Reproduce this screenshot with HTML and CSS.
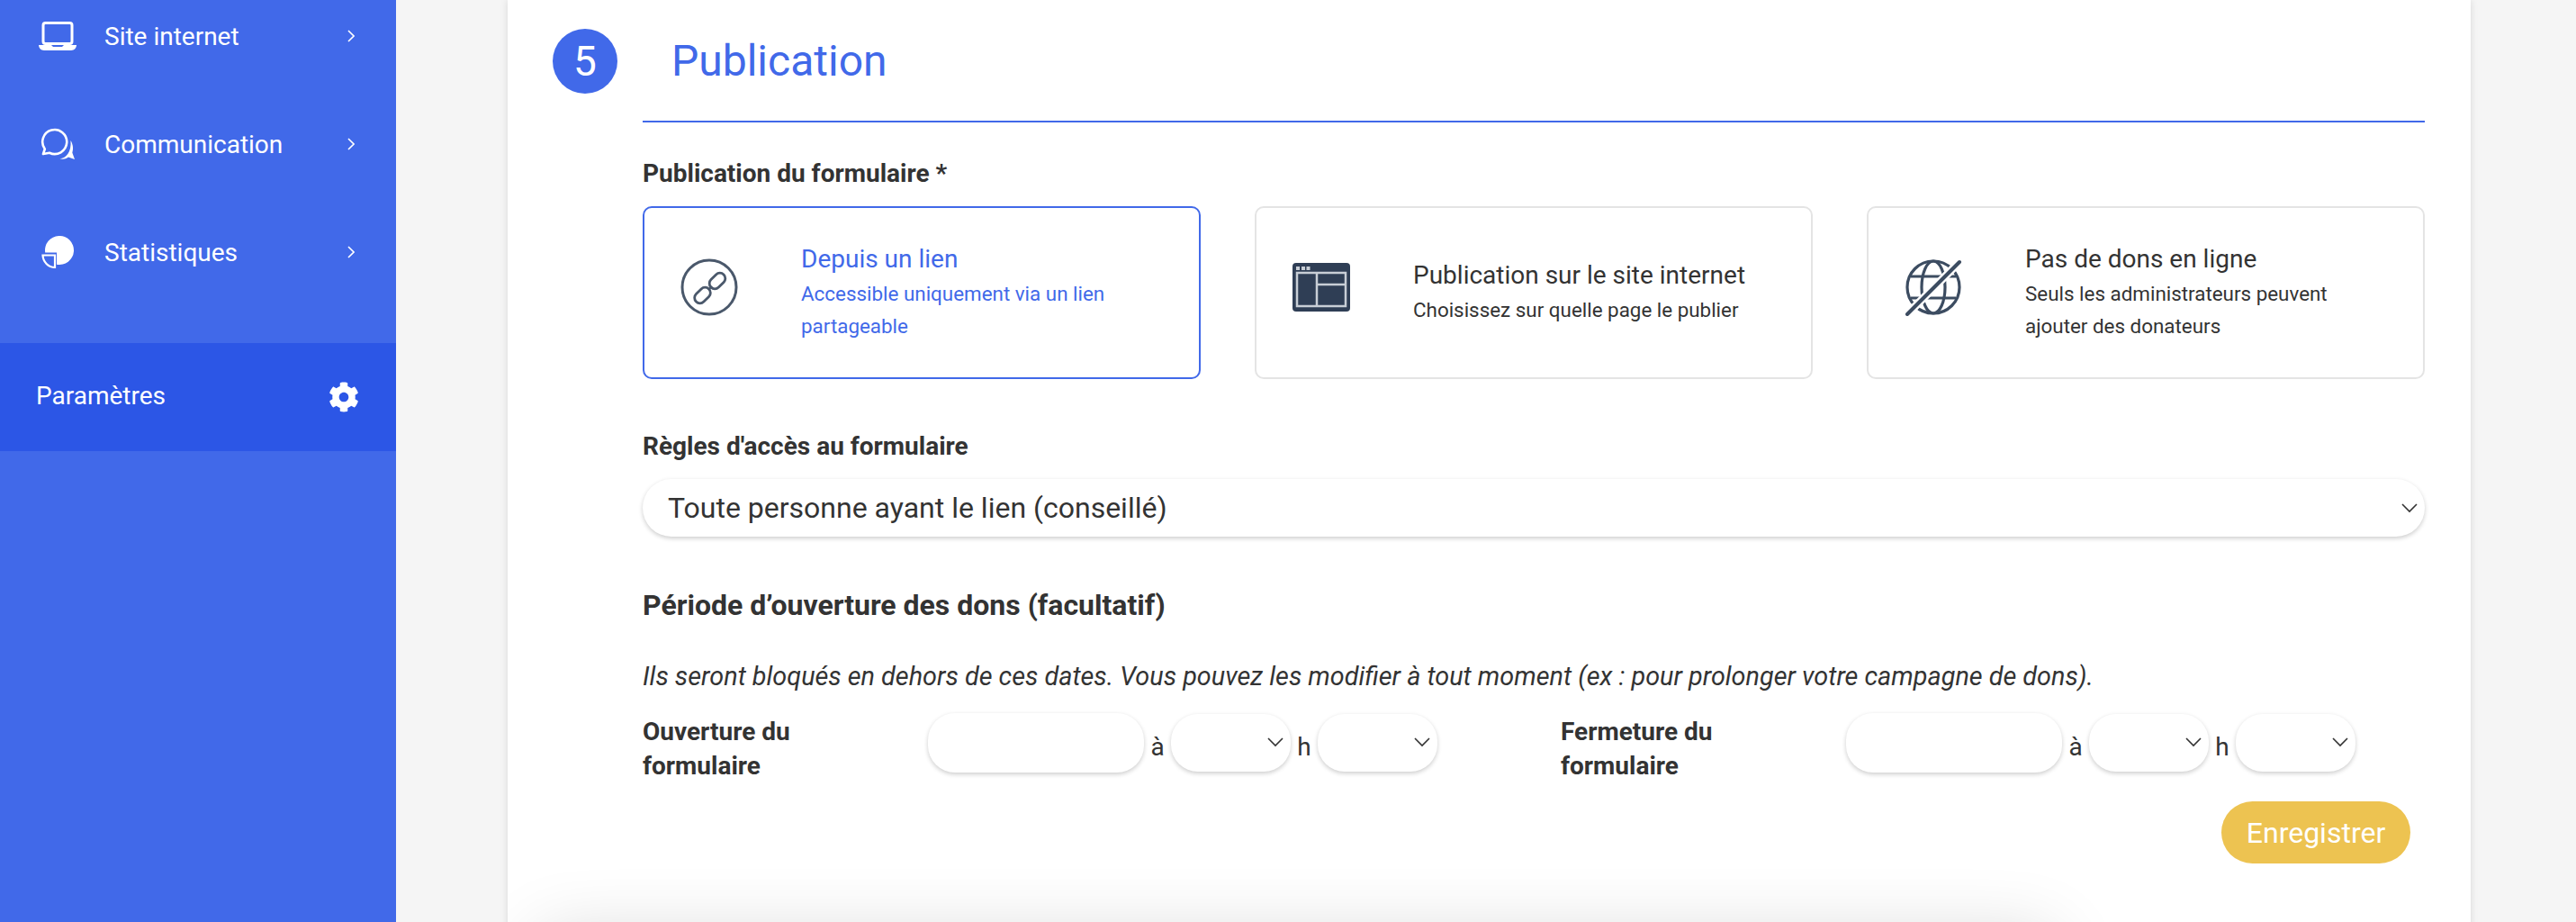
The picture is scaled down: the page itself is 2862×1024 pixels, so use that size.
FILE: index.html
```html
<!DOCTYPE html>
<html lang="fr">
<head>
<meta charset="utf-8">
<title>Publication</title>
<link rel="stylesheet" href="styles.css">
</head>
<body>
<div class="app">
  <aside class="sidebar">
    <nav class="nav">
      <a class="nav-item">
        <span class="nav-icon">
          <svg width="42" height="32" viewBox="0 0 42 32"><rect x="5" y="1.500" width="32" height="23" rx="2.500" fill="none" stroke="#fff" stroke-width="3"/><path d="M0 26h14l2 2h10l2-2h14c0 3-2.500 6-6 6H6c-3.500 0-6-3-6-6z" fill="#fff"/></svg>
        </span>
        <span class="nav-label">Site internet</span>
        <svg class="nav-chevron" width="8" height="14" viewBox="0 0 8 14"><path d="M1 1l6 6-6 6" fill="none" stroke="#fff" stroke-width="1.600"/></svg>
      </a>
      <a class="nav-item">
        <span class="nav-icon">
          <svg width="42" height="36" viewBox="0 0 42 36"><g transform="translate(3 1)"><path d="M9 26.800A13.500 13.500 0 1 0 3.800 22.500L2 28z" fill="none" stroke="#fff" stroke-width="2.600" stroke-linejoin="round"/><path d="M32.500 13c3 5 3 10 1.800 13.500L37 34l-7-2.500c-3 2-6 2.800-9.500 1.800 7-.8 13-7 12-20.300z" fill="#fff"/></g></svg>
        </span>
        <span class="nav-label">Communication</span>
        <svg class="nav-chevron" width="8" height="14" viewBox="0 0 8 14"><path d="M1 1l6 6-6 6" fill="none" stroke="#fff" stroke-width="1.600"/></svg>
      </a>
      <a class="nav-item">
        <span class="nav-icon">
          <svg width="42" height="36" viewBox="0 0 42 36"><g transform="translate(3 0)"><path d="M17 31.700V18.500H4.200A16 16 0 1 1 17 31.700z" fill="#fff"/><path d="M1.500 21.500H15V35A14 14 0 0 1 1.500 21.500z" fill="none" stroke="#fff" stroke-width="2.200"/></g></svg>
        </span>
        <span class="nav-label">Statistiques</span>
        <svg class="nav-chevron" width="8" height="14" viewBox="0 0 8 14"><path d="M1 1l6 6-6 6" fill="none" stroke="#fff" stroke-width="1.600"/></svg>
      </a>
    </nav>
    <a class="settings">
      <span class="settings-label">Paramètres</span>
      <svg width="34" height="34" viewBox="0 0 512 512"><path fill="#fff" d="M487.4 315.7l-42.6-24.6c4.300-23.200 4.300-47 0-70.200l42.600-24.600c4.900-2.800 7.100-8.600 5.500-14-11.100-35.600-30-67.800-54.700-94.600-3.800-4.100-10-5.100-14.800-2.300L380.800 110c-17.900-15.400-38.500-27.300-60.800-35.100V25.800c0-5.600-3.900-10.500-9.400-11.700-36.700-8.200-74.300-7.800-109.200 0-5.500 1.200-9.400 6.100-9.400 11.700V75c-22.200 7.900-42.800 19.800-60.800 35.100L88.700 85.500c-4.900-2.800-11-1.900-14.800 2.300-24.700 26.700-43.600 58.900-54.700 94.600-1.700 5.400.6 11.200 5.500 14L67.300 221c-4.300 23.200-4.300 47 0 70.200l-42.600 24.600c-4.900 2.800-7.100 8.600-5.500 14 11.100 35.600 30 67.800 54.700 94.600 3.800 4.100 10 5.100 14.800 2.300l42.600-24.600c17.900 15.400 38.500 27.300 60.800 35.100v49.200c0 5.600 3.900 10.500 9.400 11.700 36.700 8.200 74.300 7.800 109.200 0 5.500-1.200 9.400-6.100 9.400-11.700v-49.200c22.200-7.900 42.800-19.800 60.800-35.100l42.600 24.600c4.900 2.800 11 1.900 14.800-2.300 24.700-26.700 43.600-58.900 54.700-94.600 1.500-5.500-.7-11.300-5.600-14.100zM256 336c-44.100 0-80-35.900-80-80s35.900-80 80-80 80 35.900 80 80-35.900 80-80 80z"/></svg>
    </a>
  </aside>

  <main class="main">
    <section class="panel">
      <header class="step-head">
        <span class="step-num">5</span>
        <h2 class="step-title">Publication</h2>
      </header>
      <form class="form">
        <div class="field-label first">Publication du formulaire *</div>
        <div class="choices">
          <div class="choice active">
            <span class="choice-icon">
              <svg width="64" height="64" viewBox="0 0 64 64" fill="none" stroke="#4a586b"><circle cx="32" cy="32" r="30" stroke-width="3"/><g stroke-width="2.800"><rect x="14.500" y="35" width="20" height="12" rx="6" transform="rotate(-45 24.500 41)"/><rect x="31" y="19" width="20" height="12" rx="6" transform="rotate(-45 41 25)"/></g><path d="M31 35l4-4" stroke-width="2.400"/></svg>
            </span>
            <div class="choice-text">
              <div class="choice-title">Depuis un lien</div>
              <div class="choice-sub">Accessible uniquement via un lien partageable</div>
            </div>
          </div>
          <div class="choice">
            <span class="choice-icon">
              <svg width="64" height="54" viewBox="0 0 64 54"><rect width="64" height="54" rx="4" fill="#2f3e55"/><rect x="5" y="11" width="54" height="37" fill="none" stroke="#c8ced6" stroke-width="2.500"/><path d="M27 11v37M27 24h32" stroke="#c8ced6" stroke-width="2.500" fill="none"/><path d="M4 4h4v4H4zM10 4h4v4h-4zM15.500 4h4v4h-4z" fill="#c8ced6"/></svg>
            </span>
            <div class="choice-text">
              <div class="choice-title">Publication sur le site internet</div>
              <div class="choice-sub">Choisissez sur quelle page le publier</div>
            </div>
          </div>
          <div class="choice">
            <span class="choice-icon">
              <svg width="64" height="64" viewBox="0 0 64 64" fill="none" stroke="#3c4c61" stroke-width="3.200"><circle cx="32" cy="32" r="29"/><ellipse cx="32" cy="32" rx="13" ry="29"/><path d="M7 20h50M7 44h50"/><path d="M3 62L61 4" stroke="#fff" stroke-width="9"/><path d="M3 62L61 4" stroke-width="4" stroke-linecap="round"/></svg>
            </span>
            <div class="choice-text">
              <div class="choice-title">Pas de dons en ligne</div>
              <div class="choice-sub">Seuls les administrateurs peuvent ajouter des donateurs</div>
            </div>
          </div>
        </div>

        <div class="field-label second">Règles d'accès au formulaire</div>
        <div class="select-wrap wide">
          <select class="control select-main">
            <option>Toute personne ayant le lien (conseillé)</option>
          </select>
          <svg class="select-chevron" width="18" height="11" viewBox="0 0 18 11"><path d="M1 1l8 8 8-8" fill="none" stroke="#333" stroke-width="1.600"/></svg>
        </div>

        <h3 class="section-title">Période d’ouverture des dons (facultatif)</h3>
        <p class="hint">Ils seront bloqués en dehors de ces dates. Vous pouvez les modifier à tout moment (ex : pour prolonger votre campagne de dons).</p>

        <div class="dates">
          <div class="date-group">
            <label class="date-label">Ouverture du formulaire</label>
            <input class="control date-input" type="text">
            <span class="date-sep">à</span>
            <div class="select-wrap time"><select class="control"></select><svg class="select-chevron" width="18" height="11" viewBox="0 0 18 11"><path d="M1 1l8 8 8-8" fill="none" stroke="#333" stroke-width="1.600"/></svg></div>
            <span class="date-sep">h</span>
            <div class="select-wrap time"><select class="control"></select><svg class="select-chevron" width="18" height="11" viewBox="0 0 18 11"><path d="M1 1l8 8 8-8" fill="none" stroke="#333" stroke-width="1.600"/></svg></div>
          </div>
          <div class="date-group">
            <label class="date-label">Fermeture du formulaire</label>
            <input class="control date-input" type="text">
            <span class="date-sep">à</span>
            <div class="select-wrap time"><select class="control"></select><svg class="select-chevron" width="18" height="11" viewBox="0 0 18 11"><path d="M1 1l8 8 8-8" fill="none" stroke="#333" stroke-width="1.600"/></svg></div>
            <span class="date-sep">h</span>
            <div class="select-wrap time"><select class="control"></select><svg class="select-chevron" width="18" height="11" viewBox="0 0 18 11"><path d="M1 1l8 8 8-8" fill="none" stroke="#333" stroke-width="1.600"/></svg></div>
          </div>
        </div>

        <div class="actions">
          <button class="save" type="button">Enregistrer</button>
        </div>
      </form>
      <div class="next-block"></div>
    </section>
  </main>
</div>
</body>
</html>
```
FILE: styles.css
```css
* { box-sizing: border-box; }
html, body { margin: 0; height: 1024px; overflow: hidden; }
body {
  font-family: Roboto, "Liberation Sans", sans-serif;
  color: #333;
  background: #f5f5f5;
}
.app { display: flex; height: 1024px; overflow: hidden; }

/* Sidebar */
.sidebar {
  flex: 0 0 440px;
  background: #4169e9;
  color: #fff;
  overflow: hidden;
}
.nav { margin-top: -20px; }
.nav-item {
  display: flex;
  align-items: center;
  height: 120px;
  padding: 0 46px 0 43px;
}
.nav-icon { flex: 0 0 42px; display: flex; margin-right: 31px; }
.nav-label { font-size: 28px; line-height: 41px; }
.nav-chevron { margin-left: auto; }
.settings {
  display: flex;
  align-items: center;
  justify-content: space-between;
  height: 120px;
  margin-top: 41px;
  padding: 0 41px 0 40px;
  background: #2c56e6;
}
.settings-label { font-size: 28px; line-height: 38px; padding-bottom: 2px; }

/* Main */
.main { flex: 1; padding-left: 124px; min-width: 0; }
.panel {
  width: 2181px;
  height: 1200px;
  padding-top: 32px;
  overflow: hidden;
  background: #fff;
  box-shadow: 0 0 8px rgba(0, 0, 0, .12);
}
.step-head {
  display: flex;
  align-items: center;
  gap: 60px;
  padding-left: 50px;
}
.step-num {
  flex: 0 0 72px;
  height: 72px;
  border-radius: 50%;
  background: #4169e9;
  color: #fff;
  font-size: 46px;
  line-height: 72px;
  text-align: center;
}
.step-title { margin: 0; color: #4169e9; font-size: 48px; font-weight: 400; line-height: 72px; }
.form {
  margin: 30px 51px 0 150px;
  border-top: 2px solid #4169e9;
}
.field-label { font-size: 28px; font-weight: 700; line-height: 38px; }
.field-label.first { margin-top: 38px; }
.field-label.second { margin-top: 56px; }

/* Choice cards */
.choices {
  display: grid;
  grid-template-columns: repeat(3, 1fr);
  gap: 60px;
  margin-top: 17px;
}
.choice {
  display: flex;
  align-items: center;
  height: 192px;
  padding: 0 40px;
  border: 2px solid #e4e4e4;
  border-radius: 10px;
}
.choice.active { border-color: #4169e9; color: #4169e9; }
.choice-icon { flex: 0 0 64px; display: flex; justify-content: center; margin: 0 70px 12px 0; }
.choice-text { padding-bottom: 2px; }
.choice-title { font-size: 28px; line-height: 40px; }
.choice-sub { font-size: 22.400px; line-height: 36px; padding-right: 40px; }

/* Controls */
.select-wrap { position: relative; }
.control {
  display: block;
  width: 100%;
  margin: 0;
  border: 0;
  background: #fff;
  color: #333;
  font-family: inherit;
  appearance: none;
  outline: 0;
  box-shadow: 0 2px 5px rgba(0, 0, 0, .2);
}
.select-main {
  height: 64px;
  padding: 0 28px;
  border-radius: 32px;
  font-size: 32px;
}
.select-wrap.wide { margin-top: 17px; }
.select-chevron { position: absolute; right: 8px; top: 27px; pointer-events: none; }

.section-title { margin: 54px 0 0; font-size: 32px; font-weight: 700; line-height: 44px; }
.hint { margin: 38px 0 0; font-size: 28.800px; font-style: italic; line-height: 38px; }

.dates {
  display: grid;
  grid-template-columns: 1020px 1fr;
  margin-top: 22px;
}
.date-group { display: flex; align-items: center; height: 66px; }
.date-label {
  flex: 0 0 317px;
  align-self: flex-start;
  padding: 2px 100px 0 0;
  font-size: 28px;
  font-weight: 700;
  line-height: 38px;
}
.date-input { flex: 0 0 240px; width: 240px; height: 66px; border-radius: 30px; }
.date-sep { flex: 0 0 30px; text-align: center; font-size: 28px; line-height: 38px; padding-top: 10px; }
.select-wrap.time { flex: 0 0 133px; }
.select-wrap.time .control { height: 64px; border-radius: 30px; }
.select-wrap.time .select-chevron { top: 26px; }

.actions { display: flex; justify-content: flex-end; margin-top: 32px; padding-right: 16px; }
.save {
  width: 210px;
  height: 69px;
  border: 0;
  border-radius: 35px;
  background: #edc351;
  color: #fff;
  font-family: inherit;
  font-size: 32px;
  font-weight: 400;
}
.next-block {
  width: 1680px;
  height: 200px;
  margin: 81px 0 0 36px;
  background: #fff;
  box-shadow: 0 0 80px rgba(0, 0, 0, .16);
}
```
